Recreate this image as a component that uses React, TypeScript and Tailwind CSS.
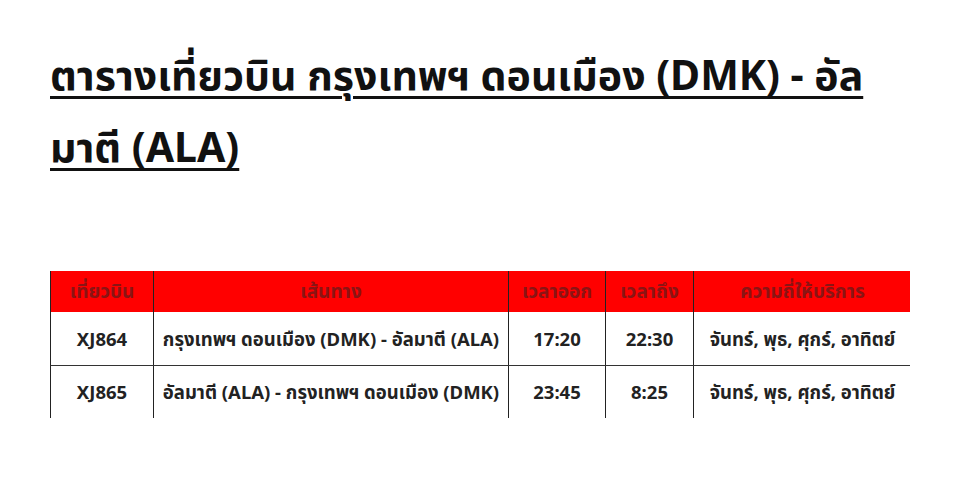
import React from "react";

const rows = [
  { no: "XJ864", route: "กรุงเทพฯ ดอนเมือง (DMK) - อัลมาตี (ALA)", dep: "17:20", arr: "22:30", freq: "จันทร์, พุธ, ศุกร์, อาทิตย์" },
  { no: "XJ865", route: "อัลมาตี (ALA) - กรุงเทพฯ ดอนเมือง (DMK)", dep: "23:45", arr: "8:25", freq: "จันทร์, พุธ, ศุกร์, อาทิตย์" },
];

export default function App() {
  return (
    <div className="w-[960px] h-[498px] bg-white overflow-hidden" style={{ fontFamily: '"Noto Sans", "Noto Sans Thai", "Open Sans", sans-serif' }}>
      <div className="pl-[50px] pt-[38px]">
        <h1 className="text-[41px] font-bold leading-[72px] text-[#111] underline decoration-[3px] underline-offset-[6px] whitespace-nowrap">
          ตารางเที่ยวบิน กรุงเทพฯ ดอนเมือง (DMK) - อัล
          <br />
          มาตี (ALA)
        </h1>
      </div>
      <div className="ml-[50px] mt-[89px] w-[860px]">
        <div className="grid grid-cols-[103px_355px_97px_88px_217px] bg-[#ff0000] h-[41px] border-l border-[#222]">
          {["เที่ยวบิน", "เส้นทาง", "เวลาออก", "เวลาถึง", "ความถี่ให้บริการ"].map((h, i) => (
            <div key={i} className={`flex items-center justify-center text-[19px] font-bold text-[#8a1414] ${i < 4 ? "border-r border-[#222]" : ""}`}>
              {h}
            </div>
          ))}
        </div>
        {rows.map((r, ri) => (
          <div key={ri} className={`grid grid-cols-[103px_355px_97px_88px_217px] border-l border-[#222] ${ri === 0 ? "border-b border-b-[#333] h-[54px]" : "h-[52px]"}`}>
            <div className="flex items-center justify-center text-[18.5px] font-bold text-[#222] border-r border-[#222]">{r.no}</div>
            <div className="flex items-center justify-center text-[18.5px] font-bold text-[#222] border-r border-[#222]">{r.route}</div>
            <div className="flex items-center justify-center text-[18.5px] font-bold text-[#222] border-r border-[#222]">{r.dep}</div>
            <div className="flex items-center justify-center text-[18.5px] font-bold text-[#222] border-r border-[#222]">{r.arr}</div>
            <div className="flex items-center justify-center text-[18.5px] font-bold text-[#222]">{r.freq}</div>
          </div>
        ))}
      </div>
    </div>
  );
}
